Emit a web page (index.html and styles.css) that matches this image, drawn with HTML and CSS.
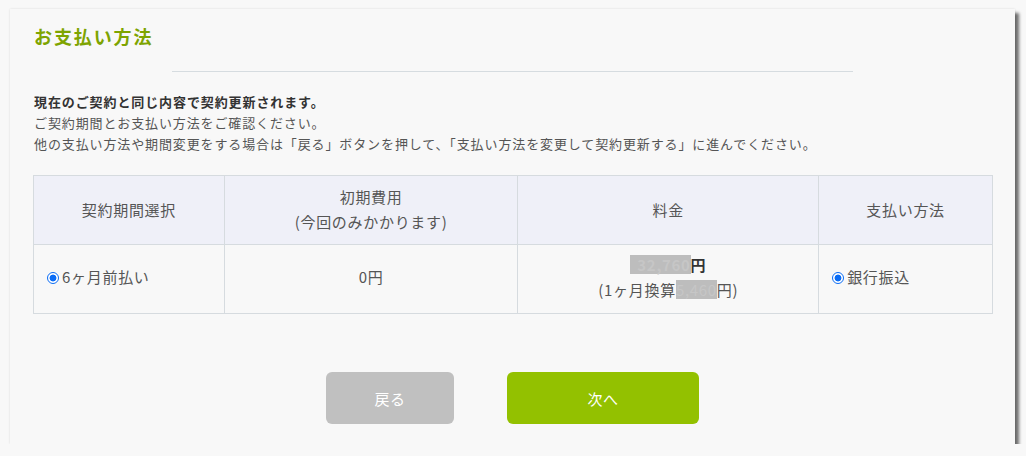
FILE: index.html
```html
<!DOCTYPE html>
<html lang="ja">
<head>
<meta charset="utf-8">
<link rel="stylesheet" href="styles.css">
</head>
<body>
<div class="card">
  <h2 class="title">お支払い方法</h2>
  <hr class="divider">
  <div class="notes">
    <p class="strong">現在のご契約と同じ内容で契約更新されます。</p>
    <p>ご契約期間とお支払い方法をご確認ください。</p>
    <p>他の支払い方法や期間変更をする場合は「戻る」ボタンを押して、「支払い方法を変更して契約更新する」に進んでください。</p>
  </div>
  <table class="plan">
    <colgroup>
      <col class="c1"><col class="c2"><col class="c3"><col class="c4">
    </colgroup>
    <thead>
      <tr>
        <th>契約期間選択</th>
        <th>初期費用<br>(今回のみかかります)</th>
        <th>料金</th>
        <th>支払い方法</th>
      </tr>
    </thead>
    <tbody>
      <tr>
        <td class="left"><span class="radio"></span>6ヶ月前払い</td>
        <td>0円</td>
        <td><span class="mask bold">32,760</span><b>円</b><br>(1ヶ月換算<span class="mask">5,460</span>円)</td>
        <td class="left pay"><span class="radio"></span>銀行振込</td>
      </tr>
    </tbody>
  </table>
  <div class="actions">
    <button class="btn back">戻る</button>
    <button class="btn next">次へ</button>
  </div>
</div>
</body>
</html>
```

FILE: styles.css
```css
html, body {
  margin: 0;
  padding: 0;
  background: #f8f8f8;
}
body {
  font-family: "Noto Sans CJK JP", "Noto Sans", sans-serif;
  color: #555;
  padding: 9px 0 0 10px;
}
.card {
  box-sizing: border-box;
  width: 1005px;
  height: 435px;
  background: #f8f8f8;
  box-shadow: 0 0 2px rgba(0,0,0,0.12), 4px 4px 3px rgba(0,0,0,0.55);
  padding: 12px 22px 0 23px;
}
.title {
  margin: 0;
  font-size: 18px;
  line-height: 30px;
  font-weight: bold;
  letter-spacing: 1.9px;
  color: #7ea400;
  padding-left: 1px;
}
.divider {
  border: 0;
  border-top: 1px solid #d6dce0;
  width: 681px;
  margin: 20px 0 0 139px;
}
.notes {
  margin-top: 19px;
  font-size: 13px;
  line-height: 21px;
  letter-spacing: 0.88px;
  padding-left: 1px;
}
.notes p { margin: 0; }
.notes .strong { color: #333; font-weight: bold; letter-spacing: 0.9px; }
.plan {
  margin-top: 21px;
  border-collapse: collapse;
  width: 960px;
  font-size: 15px;
  letter-spacing: 0.7px;
  color: #555;
}
.plan col.c1 { width: 191px; }
.plan col.c2 { width: 294px; }
.plan col.c3 { width: 301px; }
.plan col.c4 { width: 174px; }
.plan th, .plan td {
  border: 1px solid #d6dbdf;
  text-align: center;
  font-weight: normal;
  line-height: 25px;
  padding: 0;
}
.plan th {
  background: #eff0f8;
  height: 66px;
  padding-bottom: 2px;
}
.plan td { height: 63px; padding-bottom: 5px; }
.plan td.left { text-align: left; padding-left: 13px; }
.radio {
  display: inline-block;
  width: 10px;
  height: 10px;
  border-radius: 50%;
  border: 1.5px solid #0a6cf5;
  background: radial-gradient(circle, #0a6cf5 0 3.2px, #fff 3.7px);
  vertical-align: -1px;
  margin-right: 3px;
}
.mask {
  background: #bdbdbd;
  color: #c6c6c6;
  display: inline-block;
  line-height: 19px;
}
.mask.bold { font-weight: bold; padding-left: 7px; }
.plan b { color: #333; }
.actions {
  display: flex;
  gap: 53px;
  margin-top: 58px;
  padding-left: 293px;
}
.btn {
  border: 0;
  border-radius: 6px;
  height: 52px;
  color: #fff;
  font-family: inherit;
  font-size: 15px;
  letter-spacing: 0.5px;
  cursor: pointer;
}
.back { width: 128px; background: #c0c0c0; }
.next { width: 192px; background: #93c100; }
```
